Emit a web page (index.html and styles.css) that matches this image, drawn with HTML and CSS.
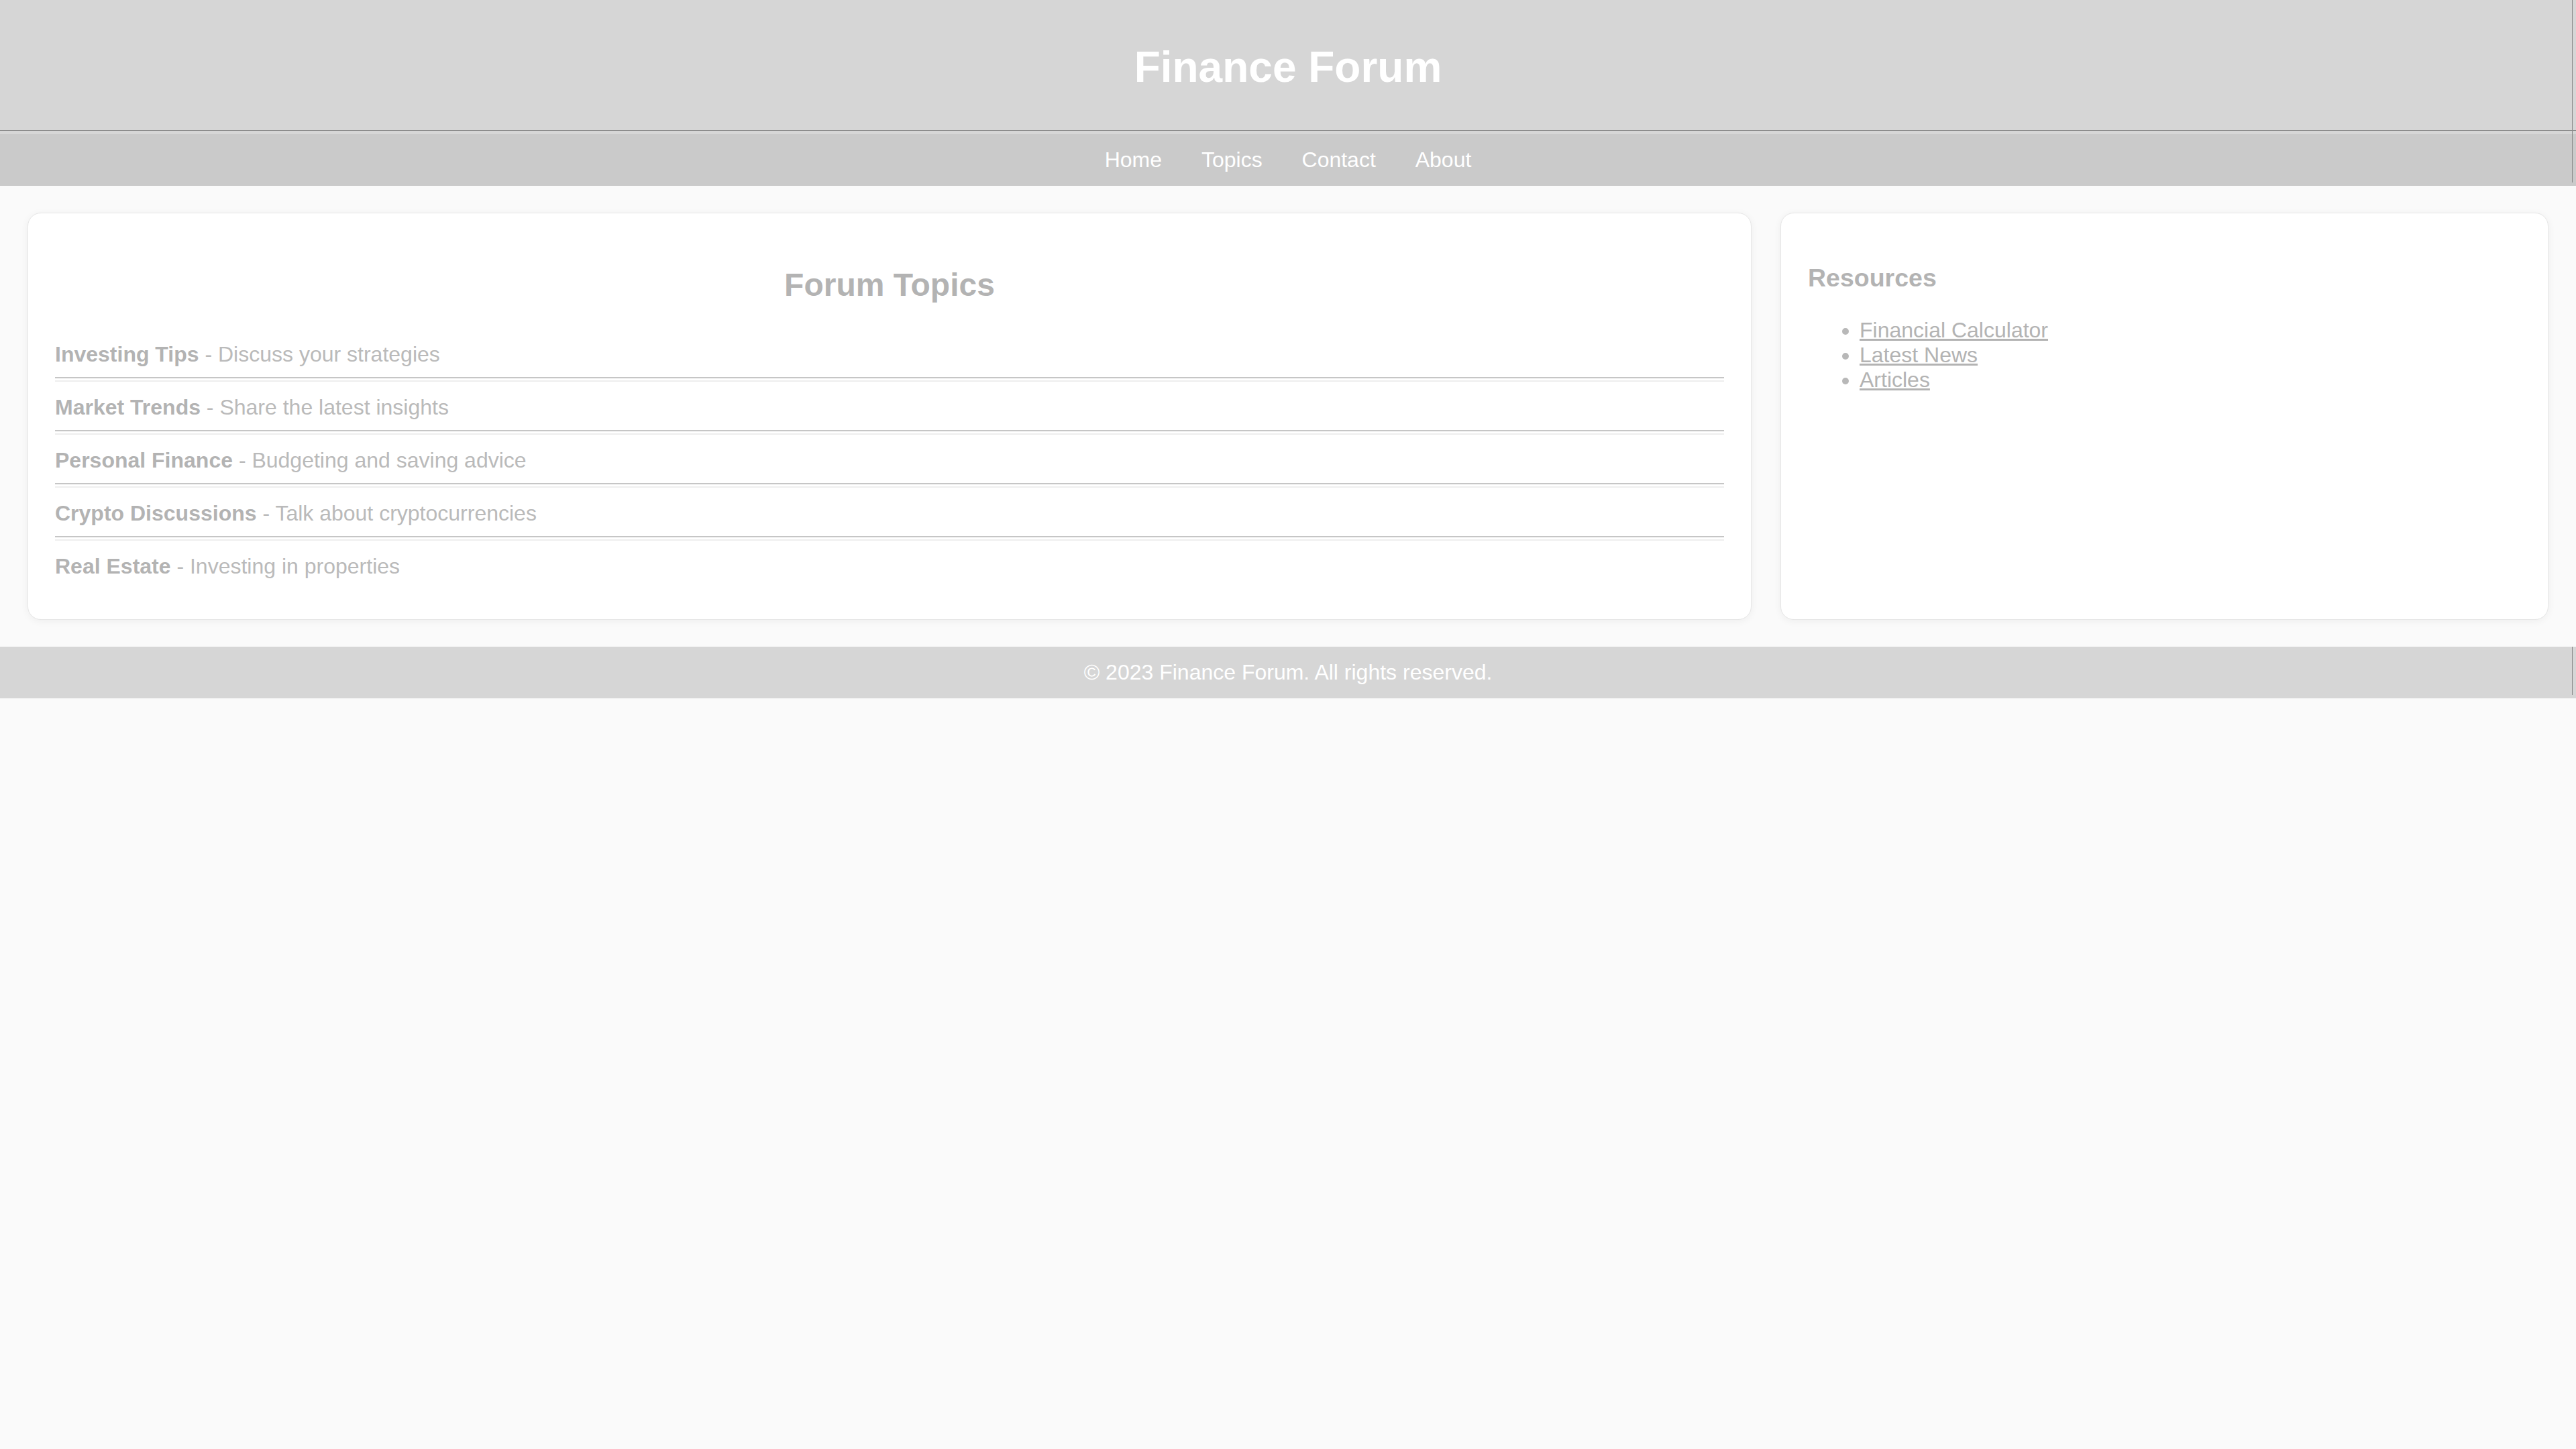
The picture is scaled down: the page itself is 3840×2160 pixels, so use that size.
FILE: index.html
```html
<!DOCTYPE html>
<html lang="en">
<head>
<meta charset="utf-8">
<title>Finance Forum</title>
<link rel="stylesheet" href="styles.css">
</head>
<body>
<header class="site-header">
  <h1 class="site-title">Finance Forum</h1>
</header>
<nav class="site-nav">
  <a class="nav-link" href="#">Home</a>
  <a class="nav-link" href="#">Topics</a>
  <a class="nav-link" href="#">Contact</a>
  <a class="nav-link" href="#">About</a>
</nav>
<main class="layout">
  <section class="card topics">
    <h2 class="topics-title">Forum Topics</h2>
    <ul class="topic-list">
      <li class="topic"><strong class="topic-name">Investing Tips</strong> - Discuss your strategies</li>
      <li class="topic"><strong class="topic-name">Market Trends</strong> - Share the latest insights</li>
      <li class="topic"><strong class="topic-name">Personal Finance</strong> - Budgeting and saving advice</li>
      <li class="topic"><strong class="topic-name">Crypto Discussions</strong> - Talk about cryptocurrencies</li>
      <li class="topic"><strong class="topic-name">Real Estate</strong> - Investing in properties</li>
    </ul>
  </section>
  <aside class="card resources">
    <h3 class="resources-title">Resources</h3>
    <ul class="resource-list">
      <li class="resource"><a class="resource-link" href="#">Financial Calculator</a></li>
      <li class="resource"><a class="resource-link" href="#">Latest News</a></li>
      <li class="resource"><a class="resource-link" href="#">Articles</a></li>
    </ul>
  </aside>
</main>
<footer class="site-footer">
  <p class="copyright">© 2023 Finance Forum. All rights reserved.</p>
</footer>
</body>
</html>
```
FILE: styles.css
```css
html, body {
  margin: 0;
  padding: 0;
}

body {
  background: #fafafa;
  font-family: "Liberation Sans", Arial, sans-serif;
  font-size: 32px;
  color: #b8b8b8;
}

.site-header {
  background-color: #d6d6d6;
  background-image:
    linear-gradient(to bottom, transparent 194px, #8a8a8a 194px, #8a8a8a 195px, transparent 195px),
    linear-gradient(to right, transparent 3834px, #8a8a8a 3834px, #8a8a8a 3835px, transparent 3835px);
  padding: 63px 0;
  text-align: center;
}

.site-title {
  margin: 0;
  font-size: 64px;
  font-weight: bold;
  color: #ffffff;
  line-height: normal;
}

.site-nav {
  background-color: #cacaca;
  background-image: linear-gradient(to right, transparent 3834px, #8a8a8a 3834px, #8a8a8a 3835px, transparent 3835px);
  background-size: 100% 72px;
  background-repeat: no-repeat;
  padding: 20px 0;
  text-align: center;
}

.nav-link {
  color: #ffffff;
  text-decoration: none;
  margin: 0 25px;
}

.layout {
  display: grid;
  grid-template-columns: 2570fr 1145fr;
  column-gap: 43px;
  padding: 40px 41px;
}

.card {
  background: #ffffff;
  border: 1px solid #e6e6e6;
  border-radius: 20px;
  box-shadow: 0 2px 12px rgba(0, 0, 0, 0.05);
  padding: 40px;
}

.topics-title {
  margin: 39px 0 38px;
  font-size: 48px;
  font-weight: bold;
  text-align: center;
  color: #b3b3b3;
}

.topic-list {
  list-style: none;
  margin: 0;
  padding: 0;
}

.topic {
  padding: 20px 0;
  border-bottom: 2px solid #eeeeee;
  color: #bababa;
  background-image: linear-gradient(to top, transparent 3px, #c6c6c6 3px, #c6c6c6 5px, transparent 5px);
}

.topic:last-child {
  border-bottom: none;
  background-image: none;
}

.topic-name {
  font-weight: bold;
  color: #b3b3b3;
}

.resources-title {
  margin: 35px 0 38px;
  font-size: 37.5px;
  font-weight: bold;
  color: #b3b3b3;
}

.resource-list {
  margin: 0;
  padding-left: 77px;
  list-style: disc;
  color: #b8b8b8;
}

.resource-link {
  color: #b3b3b3;
  text-decoration: underline;
}

.site-footer {
  background-color: #d6d6d6;
  background-image: linear-gradient(to right, transparent 3834px, #8a8a8a 3834px, #8a8a8a 3835px, transparent 3835px);
  background-size: 100% 72px;
  background-repeat: no-repeat;
  padding: 20px 0;
  text-align: center;
}

.copyright {
  margin: 0;
  color: #ffffff;
}
```
